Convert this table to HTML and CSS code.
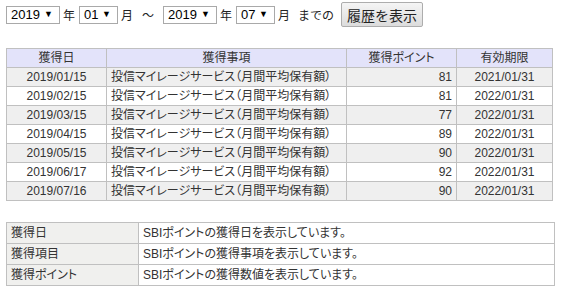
FILE: index.html
```html
<!DOCTYPE html>
<html lang="ja">
<head>
<meta charset="utf-8">
<link rel="stylesheet" href="styles.css">
</head>
<body>
<div class="form">
  <span class="sel sel-y"><span>2019</span><span class="arr">▼</span></span>
  <span class="lbl">年</span>
  <span class="sel sel-m"><span>01</span><span class="arr">▼</span></span>
  <span class="lbl">月</span>
  <span class="tilde">～</span>
  <span class="sel sel-y"><span>2019</span><span class="arr">▼</span></span>
  <span class="lbl">年</span>
  <span class="sel sel-m"><span>07</span><span class="arr">▼</span></span>
  <span class="lbl">月</span>
  <span class="made">までの</span>
  <button class="btn" type="button">履歴を表示</button>
</div>

<table class="hist">
  <colgroup>
    <col class="c1"><col class="c2"><col class="c3"><col class="c4">
  </colgroup>
  <thead>
    <tr><th>獲得日</th><th>獲得事項</th><th>獲得ポイント</th><th>有効期限</th></tr>
  </thead>
  <tbody>
    <tr class="odd"><td class="ctr">2019/01/15</td><td>投信マイレージサービス（月間平均保有額）</td><td class="num">81</td><td class="ctr">2021/01/31</td></tr>
    <tr><td class="ctr">2019/02/15</td><td>投信マイレージサービス（月間平均保有額）</td><td class="num">81</td><td class="ctr">2022/01/31</td></tr>
    <tr class="odd"><td class="ctr">2019/03/15</td><td>投信マイレージサービス（月間平均保有額）</td><td class="num">77</td><td class="ctr">2022/01/31</td></tr>
    <tr><td class="ctr">2019/04/15</td><td>投信マイレージサービス（月間平均保有額）</td><td class="num">89</td><td class="ctr">2022/01/31</td></tr>
    <tr class="odd"><td class="ctr">2019/05/15</td><td>投信マイレージサービス（月間平均保有額）</td><td class="num">90</td><td class="ctr">2022/01/31</td></tr>
    <tr><td class="ctr">2019/06/17</td><td>投信マイレージサービス（月間平均保有額）</td><td class="num">92</td><td class="ctr">2022/01/31</td></tr>
    <tr class="odd"><td class="ctr">2019/07/16</td><td>投信マイレージサービス（月間平均保有額）</td><td class="num">90</td><td class="ctr">2022/01/31</td></tr>
  </tbody>
</table>

<table class="legend">
  <colgroup><col class="l1"><col class="l2"></colgroup>
  <tbody>
    <tr><th>獲得日</th><td>SBIポイントの獲得日を表示しています。</td></tr>
    <tr><th>獲得項目</th><td>SBIポイントの獲得事項を表示しています。</td></tr>
    <tr><th>獲得ポイント</th><td>SBIポイントの獲得数値を表示しています。</td></tr>
  </tbody>
</table>
</body>
</html>
```

FILE: styles.css
```css
html, body {
  margin: 0;
  background: #fff;
}
body {
  padding: 2px 6px 0 6px;
  font-family: "Liberation Sans", "Noto Sans CJK JP", sans-serif;
  font-size: 12px;
  color: #333;
  font-feature-settings: "palt";
}
.form {
  display: flex;
  align-items: center;
  height: 25px;
  font-size: 12px;
  color: #222;
  font-feature-settings: normal;
}
.sel {
  display: inline-flex;
  align-items: center;
  justify-content: space-between;
  box-sizing: border-box;
  height: 18px;
  border: 1px solid #a9a9a9;
  padding: 0 6px 0 4px;
  font-size: 13px;
  color: #000;
  background: #fff;
  flex: none;
}
.sel-y { width: 54px; }
.sel-m { width: 39px; }
.arr {
  font-size: 9px;
  line-height: 1;
}
.lbl {
  width: 12px;
  margin: 0 4px 0 3px;
  flex: none;
}
.tilde {
  width: 12px;
  margin: 0 9px 0 5px;
  flex: none;
}
.made {
  margin: 0 7px 0 4px;
  flex: none;
}
.btn {
  box-sizing: border-box;
  width: 82px;
  height: 25px;
  border: 1px solid #adadad;
  border-radius: 2px;
  background: linear-gradient(#f5f5f5, #dcdcdc);
  font-family: "Liberation Sans", "Noto Sans CJK JP", sans-serif;
  font-size: 14px;
  color: #222;
  padding: 0;
  flex: none;
}
.hist {
  margin-top: 21px;
  border-collapse: collapse;
  width: 546px;
  table-layout: fixed;
}
.hist .c1 { width: 100px; }
.hist .c2 { width: 240px; }
.hist .c3 { width: 110px; }
.hist .c4 { width: 96px; }
.hist th, .hist td {
  border: 1px solid #c0c0c0;
  height: 18px;
  padding: 0 4px;
  line-height: 18px;
  white-space: nowrap;
  overflow: hidden;
}
.hist th {
  background: #e3e3fa;
  font-weight: normal;
  text-align: center;
}
.hist td { background: #fff; }
.hist tr.odd td { background: #efefef; }
.hist td.ctr { text-align: center; }
.hist td.num { text-align: right; }
.legend {
  margin-top: 21px;
  border-collapse: collapse;
  width: 549px;
  table-layout: fixed;
}
.legend .l1 { width: 132px; }
.legend th, .legend td {
  border: 1px solid #c0c0c0;
  height: 20px;
  padding: 0 4px;
  line-height: 20px;
  text-align: left;
  font-weight: normal;
  white-space: nowrap;
}
.legend th { background: #f0f0ee; }
.legend td { background: #fff; }
```
